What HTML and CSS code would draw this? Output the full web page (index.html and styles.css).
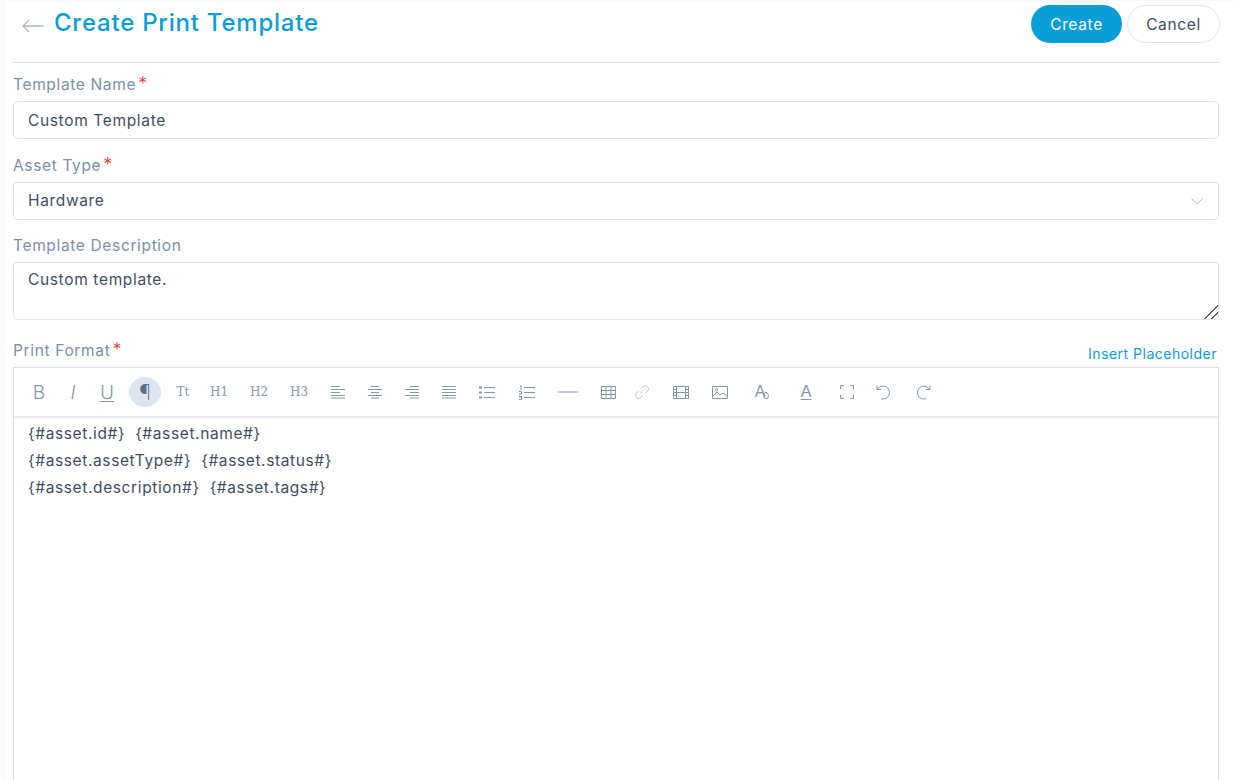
FILE: index.html
```html
<!DOCTYPE html>
<html lang="en">
<head>
    <meta charset="UTF-8">
    <meta name="viewport" content="width=device-width, initial-scale=1.0">
    <title>Create Print Template</title>
    <link rel="stylesheet" href="styles.css">
</head>
<body>
    <div class="page">
        <header class="page-header">
            <div class="title-wrap">
                <svg class="back-icon" viewBox="0 0 22 14" width="22" height="14"><path d="M21.5 7H1M7 1L1 7l6 6"/></svg>
                <h1>Create Print Template</h1>
            </div>
            <div class="actions">
                <button class="btn btn-primary">Create</button>
                <button class="btn btn-default">Cancel</button>
            </div>
        </header>

        <div class="field field-name">
            <label>Template Name<span class="req">*</span></label>
            <input class="control" type="text" value="Custom Template">
        </div>

        <div class="field field-type">
            <label>Asset Type<span class="req">*</span></label>
            <div class="control select-box">
                <span class="select-value">Hardware</span>
                <svg class="chevron" viewBox="0 0 12 7" width="12" height="7"><path d="M.5.5L6 6 11.5.5"/></svg>
            </div>
        </div>

        <div class="field field-desc">
            <label>Template Description</label>
            <textarea class="control text-area">Custom template.</textarea>
        </div>

        <div class="format-head">
            <label>Print Format<span class="req">*</span></label>
            <a href="#" class="insert-link">Insert Placeholder</a>
        </div>

        <div class="editor">
            <div class="toolbar">
                <span class="tool txt-b">B</span>
                <span class="tool txt-i gap2">I</span>
                <span class="tool txt-u gap2">U</span>
                <span class="tool tool-active txt-p">¶</span>
                <span class="tool txt-s">Tt</span>
                <span class="tool txt-s gap4">H1</span>
                <span class="tool txt-s gap8">H2</span>
                <span class="tool txt-s gap8">H3</span>
                <span class="tool gap7"><svg viewBox="0 0 14 14" width="14" height="14"><path d="M0 1.500h9M0 4.500h14M0 7.500h9M0 10.500h14M0 13h14"/></svg></span>
                <span class="tool gap5"><svg viewBox="0 0 14 14" width="14" height="14"><path d="M3 1.500h8M0 4.500h14M3 7.500h8M0 10.500h14M3 13h8"/></svg></span>
                <span class="tool gap5"><svg viewBox="0 0 14 14" width="14" height="14"><path d="M5 1.500h9M0 4.500h14M5 7.500h9M0 10.500h14M5 13h9"/></svg></span>
                <span class="tool gap5"><svg viewBox="0 0 14 14" width="14" height="14"><path d="M0 1.500h14M0 4.500h14M0 7.500h14M0 10.500h14M0 13h14"/></svg></span>
                <span class="tool"><svg viewBox="0 0 16 13" width="16" height="13"><path d="M5 1.500h11M5 6.500h11M5 11.500h11"/><path class="dot" d="M0 .5h3v2H0zM0 5.500h3v2H0zM0 10.500h3v2H0z"/></svg></span>
                <span class="tool gap8"><svg viewBox="0 0 16 15" width="16" height="15"><path d="M5 2.500h11M5 7.500h11M5 12.500h11M1 1l1-.5V5M0 6.500h2.500V9H0v2.500h3M0 12h2.500v2.500H0"/></svg></span>
                <span class="tool gap9"><svg viewBox="0 0 20 2" width="20" height="2"><path d="M0 1h20"/></svg></span>
                <span class="tool gap8"><svg viewBox="0 0 15 13" width="15" height="13"><path d="M.5.5h14v12H.5zM.5 4.500h14M.5 8.500h14M5 .5v12M10 .5v12"/></svg></span>
                <span class="tool gap2 tool-muted"><svg viewBox="0 0 16 16" width="16" height="16"><path d="M6.500 9.500l3-3M7 4.500l2-2a3 3 0 0 1 4.500 4.500l-2 2M9 11.500l-2 2a3 3 0 0 1-4.500-4.500l2-2"/></svg></span>
                <span class="tool gap7"><svg viewBox="0 0 16 13" width="16" height="13"><path d="M.5.5h15v12H.5zM3.500.5v12M12.500.5v12M3.500 6.500h9M.5 3.500h3M.5 6.500h3M.5 9.500h3M12.500 3.500h3M12.500 6.500h3M12.500 9.500h3"/></svg></span>
                <span class="tool gap7"><svg viewBox="0 0 16 13" width="16" height="13"><path d="M.5.5h15v12H.5z"/><path d="M1 10l4-4 3 3 3-2 4 3"/><circle cx="4.500" cy="3.800" r="1.200"/></svg></span>
                <span class="tool txt-a gap10">A<svg class="drop" viewBox="0 0 6 8" width="6" height="8"><path d="M3 .8C4.500 3 5.500 4 5.500 5.300a2.500 2.500 0 0 1-5 0C.5 4 1.500 3 3 .8z"/></svg></span>
                <span class="tool txt-a-line gap12">A</span>
                <span class="tool gap9"><svg viewBox="0 0 14 14" width="14" height="14"><path d="M.5 4V.5H4M10 .5h3.500V4M13.500 10v3.500H10M4 13.500H.5V10"/></svg></span>
                <span class="tool gap5"><svg viewBox="0 0 16 16" width="16" height="16"><path d="M1 1.500v4h4M1.300 5.500A6.500 6.500 0 1 1 5 14.700"/></svg></span>
                <span class="tool gap7"><svg viewBox="0 0 16 16" width="16" height="16"><path d="M15 1.500v4h-4M14.700 5.500A6.500 6.500 0 1 0 11 14.700"/></svg></span>
            </div>
            <div class="editor-body">
                <p>{#asset.id#}&nbsp; {#asset.name#}</p>
                <p>{#asset.assetType#}&nbsp; {#asset.status#}</p>
                <p>{#asset.description#}&nbsp; {#asset.tags#}</p>
            </div>
        </div>
    </div>
</body>
</html>
```

FILE: styles.css
```css
* {
    box-sizing: border-box;
}
html, body {
    height: 100%;
}
body {
    margin: 0;
    overflow: hidden;
    background: #f9fafb;
    font-family: Inter, "Noto Sans", sans-serif;
    font-size: 15.5px;
    letter-spacing: 0.65px;
    color: #3f4e62;
}
.page {
    height: 100%;
    margin: 1px 0 0 5px;
    padding: 0 15px 0 8px;
    background: white;
}
.page-header {
    display: flex;
    justify-content: space-between;
    height: 62px;
    padding-top: 4px;
    border-bottom: 1px solid #dfe5ee;
    margin-right: -1px;
}
.title-wrap {
    display: flex;
    align-items: flex-start;
    padding-left: 9px;
}
.back-icon {
    margin-top: 14px;
    margin-right: 10px;
    fill: none;
    stroke: #a9b8cb;
    stroke-width: 1.3;
}
h1 {
    margin: 0;
    font-size: 24px;
    font-weight: 500;
    line-height: 36px;
    letter-spacing: 0.77px;
    color: #099dd9;
}
.actions {
    display: flex;
    gap: 5px;
}
.btn {
    height: 38px;
    border-radius: 19px;
    font-family: inherit;
    font-size: 15.5px;
    letter-spacing: inherit;
    padding: 0;
}
.btn-primary {
    width: 91px;
    border: 0;
    background: #099dd9;
    color: white;
}
.btn-default {
    width: 93px;
    border: 1px solid #dfe5ee;
    background: white;
    color: #3f4e62;
}
.field label,
.format-head label {
    display: block;
    color: #7b8fa8;
    line-height: 22px;
}
.req {
    color: #e8372c;
    margin-left: 2px;
    font-size: 18px;
    font-weight: 300;
    line-height: 0;
}
.field-name {
    margin-top: 10px;
}
.field-type {
    margin-top: 15px;
}
.field-desc {
    margin-top: 14px;
}
.field label {
    padding-top: 1px;
    margin-bottom: 5px;
}
.control {
    display: block;
    width: 100%;
    border: 1px solid #dfe5ee;
    border-radius: 4px;
    background: white;
    font-family: inherit;
    font-size: 15.5px;
    letter-spacing: inherit;
    color: #3f4e62;
    padding: 0 14px;
    outline: none;
}
input.control {
    height: 38px;
}
.select-box {
    display: flex;
    align-items: center;
    justify-content: space-between;
    height: 38px;
    padding-right: 15px;
}
.select-value {
    margin-bottom: 2px;
}
.chevron {
    fill: none;
    stroke: #b5c2d3;
    stroke-width: 1;
}
.text-area {
    height: 58px;
    padding-top: 6px;
    line-height: 22px;
    resize: vertical;
}
.text-area::-webkit-resizer {
    background: linear-gradient(135deg, transparent 52%, #666 52%, #666 57%, transparent 57%, transparent 76%, #666 76%, #666 81%, transparent 81%);
}
.format-head {
    display: flex;
    justify-content: space-between;
    align-items: flex-start;
    margin-top: 20px;
}
.insert-link {
    margin-top: 4px;
    margin-right: 2px;
    font-size: 14px;
    line-height: 20px;
    letter-spacing: 0.5px;
    color: #099dd9;
    text-decoration: none;
}
.editor {
    height: 600px;
    margin-top: 3px;
    border: 1px solid #dfe5ee;
    border-bottom: 0;
}
.toolbar {
    display: flex;
    align-items: center;
    height: 48px;
    padding-left: 9px;
    box-shadow: 0 1px 3px rgba(100, 120, 150, 0.3);
}
.tool {
    display: flex;
    align-items: center;
    justify-content: center;
    flex: none;
    width: 32px;
    height: 30px;
    margin-left: 6px;
    border-radius: 50%;
    color: #8497ae;
    font-family: "Liberation Serif", serif;
    font-size: 13px;
    letter-spacing: 0;
}
.tool svg {
    fill: none;
    stroke: #8497ae;
    stroke-width: 1;
}
.tool svg .dot {
    fill: #8497ae;
    stroke: none;
}
.tool:first-child {
    margin-left: 0;
}
.gap2 { margin-left: 2px; }
.gap4 { margin-left: 4px; }
.gap5 { margin-left: 5px; }
.gap7 { margin-left: 7px; }
.gap8 { margin-left: 8px; }
.gap9 { margin-left: 9px; }
.gap10 { margin-left: 10px; }
.gap12 { margin-left: 12px; }
.tool-active {
    background: #dfe5ee;
    color: #5d7088;
}
.tool-muted svg {
    stroke: #bac6d5;
}
.txt-b,
.txt-u {
    font-family: Inter, sans-serif;
    font-size: 19px;
    font-weight: 300;
}
.txt-i {
    font-family: Inter, sans-serif;
    font-size: 19px;
    font-style: italic;
    font-weight: 300;
}
.txt-u {
    text-decoration: underline;
    text-decoration-thickness: 1px;
    text-underline-offset: 2px;
}
.txt-p {
    font-family: Inter, sans-serif;
    font-size: 22px;
    font-weight: 200;
}
.txt-s {
    font-family: "DejaVu Serif", serif;
    font-size: 12px;
}
.txt-a,
.txt-a-line {
    font-family: "Liberation Sans", sans-serif;
    font-size: 16px;
}
.txt-a-line {
    text-decoration: underline;
    text-decoration-thickness: 1px;
    text-underline-offset: 2px;
}
.drop {
    margin-left: -2px;
    margin-top: 6px;
}
.editor-body {
    padding: 4px 14px;
    font-size: 15.5px;
    letter-spacing: 0.62px;
    line-height: 27px;
}
.editor-body p {
    margin: 0;
}
```
